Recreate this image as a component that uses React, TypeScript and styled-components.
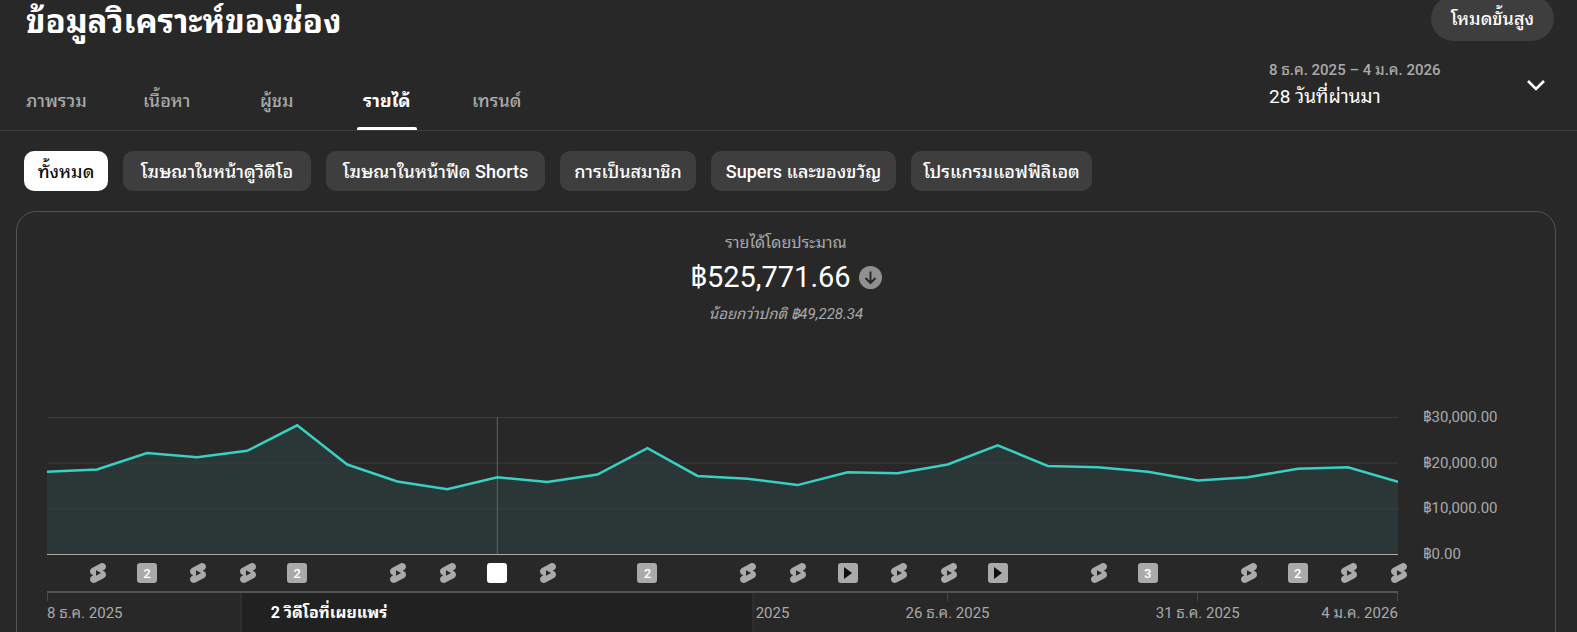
import React from "react";
import styled, { createGlobalStyle } from "styled-components";

const revenue = [
  18100, 18600, 22200, 21300, 22700, 28300, 19700, 16000, 14300, 16900, 15900, 17500, 23300, 17200,
  16600, 15200, 18000, 17800, 19700, 23900, 19400, 19100, 18100, 16200, 16900, 18800, 19100, 15900,
];

type Marker = "short" | "video" | "selected" | "2" | "3" | null;

const markers: Marker[] = [
  null, "short", "2", "short", "short", "2", null, "short", "short", "selected", "short", null, "2", null,
  "short", "short", "video", "short", "short", "video", null, "short", "3", null, "short", "2", "short", "short",
];

const dates: { [day: number]: string } = {
  0: "8 ธ.ค. 2025",
  14: "22 ธ.ค. 2025",
  18: "26 ธ.ค. 2025",
  23: "31 ธ.ค. 2025",
  27: "4 ม.ค. 2026",
};

const SELECTED = 9;
const LAST = revenue.length - 1;

const GlobalStyle = createGlobalStyle`
  * { box-sizing: border-box; }
  html { background: #282828; }
  body {
    margin: 0;
    background: #282828;
    color: #fff;
    font-family: Roboto, "Noto Sans Thai Looped", "Noto Sans Thai", "Noto Sans", "Liberation Sans", sans-serif;
    font-size: 15px;
  }
  button { font-family: inherit; border: 0; cursor: pointer; }
`;

const Page = styled.div`
  height: 100vh;
  overflow: hidden;
`;

const Header = styled.header`
  display: flex;
  justify-content: space-between;
  align-items: center;
  margin-top: -4px;
  padding: 0 23px 0 26px;
  height: 45px;
`;

const Title = styled.h1`
  margin: 0;
  padding-top: 6px;
  font-size: 33px;
  line-height: 40px;
  font-weight: 700;
`;

const PillButton = styled.button`
  height: 45px;
  padding: 0 20px 3px;
  border-radius: 23px;
  background: #3e3e3e;
  color: #fff;
  font-size: 18px;
  font-weight: 500;
`;

const Toolbar = styled.div`
  display: flex;
  justify-content: space-between;
  height: 90px;
  padding: 0 32px 0 26px;
  border-bottom: 1px solid #3e3e3e;
`;

const Tabs = styled.nav`
  display: flex;
  align-items: flex-end;
  gap: 50px;
`;

const Tab = styled.button<{ $active?: boolean }>`
  display: flex;
  flex-direction: column;
  justify-content: space-between;
  align-items: center;
  min-width: 60px;
  height: 40px;
  padding: 0;
  background: none;
  color: ${(p) => (p.$active ? "#fff" : "#aaa")};
  font-size: 18px;
  line-height: 22px;
  font-weight: ${(p) => (p.$active ? 700 : 500)};
  &::after {
    content: "";
    width: 100%;
    height: 3px;
    border-radius: 2px 2px 0 0;
    background: ${(p) => (p.$active ? "#fff" : "transparent")};
  }
`;

const DatePicker = styled.button`
  display: flex;
  justify-content: space-between;
  align-items: center;
  width: 276px;
  height: 56px;
  margin-top: 16px;
  padding: 0;
  background: none;
  color: #fff;
  text-align: left;
`;

const Range = styled.span`
  display: block;
  color: #aaa;
  font-size: 15px;
  line-height: 24px;
  font-weight: 500;
`;

const Period = styled.span`
  display: block;
  font-size: 19px;
  line-height: 30px;
`;

const Chips = styled.div`
  display: flex;
  gap: 15px;
  padding: 20px 24px;
`;

const Chip = styled.button<{ $width: number; $active?: boolean }>`
  height: 40px;
  min-width: ${(p) => p.$width}px;
  padding: 0 12px 3px;
  border-radius: 10px;
  background: ${(p) => (p.$active ? "#fff" : "#3e3e3e")};
  color: ${(p) => (p.$active ? "#0f0f0f" : "#fff")};
  font-size: 18px;
  font-weight: 500;
  white-space: nowrap;
`;

const Card = styled.section`
  margin: 0 21px 0 16px;
  padding: 20px 30px;
  border: 1px solid #535353;
  border-radius: 20px;
`;

const Metric = styled.div`
  display: flex;
  flex-direction: column;
  align-items: center;
  height: 185px;
`;

const MetricLabel = styled.div`
  color: #aaa;
  font-size: 16px;
  line-height: 22px;
`;

const MetricValue = styled.div`
  display: flex;
  align-items: center;
  gap: 8px;
  font-size: 29px;
  line-height: 46px;
`;

const MetricNote = styled.div`
  color: #aaa;
  font-style: italic;
  line-height: 28px;
`;

const Chart = styled.div`
  display: grid;
  grid-template-columns: 1fr 127px;
`;

const Plot = styled.svg`
  display: block;
  width: 100%;
  height: 138px;
`;

const Scale = styled.div`
  display: flex;
  flex-direction: column;
  justify-content: space-between;
  height: 157px;
  margin-top: -10px;
  padding-left: 25px;
  color: #aaa;
  line-height: 20px;
`;

const DayRow = styled.div`
  display: flex;
  justify-content: space-between;
  align-items: center;
`;

const MarkerRow = styled(DayRow)`
  height: 38px;
  border-bottom: 2px solid #535353;
`;

const Day = styled.div`
  display: flex;
  justify-content: center;
  width: 0;
`;

const Badge = styled.button<{ $selected?: boolean }>`
  display: flex;
  flex: none;
  justify-content: center;
  align-items: center;
  width: 20px;
  height: 20px;
  padding: 0;
  border-radius: 3px;
  background: ${(p) => (p.$selected ? "#fff" : "#aaa")};
  color: #fff;
  font-size: 13px;
  font-weight: 500;
`;

const ShortBadge = styled(Badge)`
  width: 24px;
  height: 24px;
  background: none;
`;

const Axis = styled.div`
  position: relative;
`;

const DateRow = styled(DayRow)`
  align-items: flex-start;
  height: 60px;
`;

const DateTick = styled.div<{ $align: "flex-start" | "center" | "flex-end" }>`
  display: flex;
  flex-direction: column;
  align-items: ${(p) => p.$align};
  width: 0;
  color: #aaa;
  line-height: 24px;
  white-space: nowrap;
  &::before {
    content: "";
    flex: none;
    width: 1px;
    height: 8px;
    background: #484848;
  }
`;

const Popup = styled.div`
  position: absolute;
  top: 0;
  left: ${(100 * SELECTED) / LAST}%;
  width: 513px;
  height: 80px;
  padding: 8px 29px;
  transform: translateX(-50%);
  border: 1px solid #3a3a3a;
  border-top: 0;
  background: #212121;
  font-size: 16px;
  line-height: 24px;
  font-weight: 700;
`;

const ShortsIcon = () => (
  <svg width="24" height="24" viewBox="-1 0 24 24" aria-hidden="true">
    <path
      fill="#aaa"
      d="M17.77 10.32l-1.2-.5L18 9.06c1.84-.96 2.53-3.23 1.56-5.06s-3.24-2.53-5.07-1.56L6 6.94c-1.29.68-2.07 2.04-2 3.49.07 1.42.93 2.67 2.22 3.25.03.01 1.2.5 1.2.5L6 14.93c-1.83.97-2.53 3.24-1.56 5.07.97 1.83 3.24 2.53 5.07 1.56l8.5-4.5c1.29-.68 2.06-2.04 1.99-3.49-.07-1.42-.94-2.68-2.23-3.25zM10 14.65v-5.3L15 12l-5 2.65z"
    />
  </svg>
);

const MarkerBadge = ({ kind }: { kind: Marker }) => {
  if (kind === null) return null;
  if (kind === "short")
    return (
      <ShortBadge aria-label="Shorts">
        <ShortsIcon />
      </ShortBadge>
    );
  if (kind === "video")
    return (
      <Badge aria-label="วิดีโอ">
        <svg width="8" height="12" viewBox="0 0 8 12" aria-hidden="true">
          <path d="M0 0L8 6L0 12Z" fill="#0f0f0f" />
        </svg>
      </Badge>
    );
  if (kind === "selected") return <Badge $selected aria-label="2 วิดีโอ" />;
  return <Badge>{kind}</Badge>;
};

const toY = (value: number) => 138 - (value / 30000) * 137 - 0.5;
const line = revenue.map((v, i) => `${i},${toY(v)}`).join(" ");

const RevenuePlot = () => (
  <Plot viewBox={`0 0 ${LAST} 138`} preserveAspectRatio="none" role="img" aria-label="รายได้โดยประมาณ">
    <polygon points={`0,138 ${line} ${LAST},138`} fill="#2b3737" />
    {[30000, 20000, 10000].map((v) => (
      <line key={v} x1="0" x2={LAST} y1={toY(v)} y2={toY(v)} stroke="#3b3b3b" vectorEffect="non-scaling-stroke" />
    ))}
    <line x1={SELECTED} x2={SELECTED} y1="0" y2="138" stroke="#606565" vectorEffect="non-scaling-stroke" />
    <polyline points={line} fill="none" stroke="#38d0c2" strokeWidth="2.5" vectorEffect="non-scaling-stroke" />
    <line x1="0" x2={LAST} y1={toY(0)} y2={toY(0)} stroke="#aaa" vectorEffect="non-scaling-stroke" />
  </Plot>
);

const alignOf = (day: number) => (day === 0 ? "flex-start" : day === LAST ? "flex-end" : "center");

export default function App() {
  return (
    <Page>
      <GlobalStyle />
      <Header>
        <Title>ข้อมูลวิเคราะห์ของช่อง</Title>
        <PillButton>โหมดขั้นสูง</PillButton>
      </Header>
      <Toolbar>
        <Tabs>
          <Tab>ภาพรวม</Tab>
          <Tab>เนื้อหา</Tab>
          <Tab>ผู้ชม</Tab>
          <Tab $active>รายได้</Tab>
          <Tab>เทรนด์</Tab>
        </Tabs>
        <DatePicker>
          <span>
            <Range>8 ธ.ค. 2025 – 4 ม.ค. 2026</Range>
            <Period>28 วันที่ผ่านมา</Period>
          </span>
          <svg width="18" height="12" viewBox="0 0 18 12" aria-hidden="true">
            <path d="M1 2L9 10L17 2" fill="none" stroke="#fff" strokeWidth="2.6" />
          </svg>
        </DatePicker>
      </Toolbar>
      <Chips>
        <Chip $width={84} $active>ทั้งหมด</Chip>
        <Chip $width={188}>โฆษณาในหน้าดูวิดีโอ</Chip>
        <Chip $width={219}>โฆษณาในหน้าฟีด Shorts</Chip>
        <Chip $width={136}>การเป็นสมาชิก</Chip>
        <Chip $width={185}>Supers และของขวัญ</Chip>
        <Chip $width={181}>โปรแกรมแอฟฟิลิเอต</Chip>
      </Chips>
      <Card>
        <Metric>
          <MetricLabel>รายได้โดยประมาณ</MetricLabel>
          <MetricValue>
            ฿525,771.66
            <svg width="23" height="23" viewBox="0 0 23 23" aria-hidden="true">
              <circle cx="11.5" cy="11.5" r="11.5" fill="#909090" />
              <path d="M11.5 5.5V17M6.5 12L11.5 17L16.5 12" fill="none" stroke="#282828" strokeWidth="2" />
            </svg>
          </MetricValue>
          <MetricNote>น้อยกว่าปกติ ฿49,228.34</MetricNote>
        </Metric>
        <Chart>
          <div>
            <RevenuePlot />
            <MarkerRow>
              {markers.map((kind, i) => (
                <Day key={i}>
                  <MarkerBadge kind={kind} />
                </Day>
              ))}
            </MarkerRow>
            <Axis>
              <DateRow>
                {revenue.map((_, i) =>
                  dates[i] ? (
                    <DateTick key={i} $align={alignOf(i)}>
                      {dates[i]}
                    </DateTick>
                  ) : (
                    <Day key={i} />
                  ),
                )}
              </DateRow>
              <Popup>2 วิดีโอที่เผยแพร่</Popup>
            </Axis>
          </div>
          <Scale>
            <span>฿30,000.00</span>
            <span>฿20,000.00</span>
            <span>฿10,000.00</span>
            <span>฿0.00</span>
          </Scale>
        </Chart>
      </Card>
    </Page>
  );
}
